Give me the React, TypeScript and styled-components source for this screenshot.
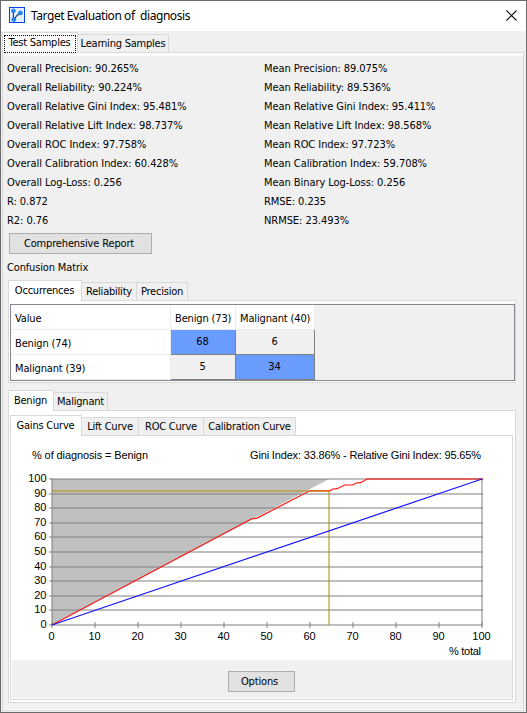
import React from "react";
import styled, { createGlobalStyle } from "styled-components";

const Global = createGlobalStyle`
  * { box-sizing: border-box; }
  body { margin: 0; background: #f0f0f0; }
`;

const Window = styled.main`
  width: 527px;
  height: 713px;
  display: flex;
  flex-direction: column;
  background: #f0f0f0;
  border: 1px solid #6b6a6c;
  font: 11px/14px "DejaVu Sans Condensed", "DejaVu Sans", sans-serif;
  letter-spacing: -0.15px;
  color: #000;
  overflow: hidden;
  white-space: pre;
`;

const TitleBar = styled.header`
  height: 30px;
  flex: none;
  display: flex;
  align-items: center;
  padding: 0 9px 2px 8px;
  background: #fff;
`;

const Title = styled.h1`
  flex: 1;
  margin: 2px 0 0 6px;
  font: 400 12px/16px "Noto Sans", "Open Sans", sans-serif;
  letter-spacing: -0.43px;
`;

const CloseButton = styled.button`
  width: 11px;
  height: 11px;
  display: block;
  padding: 0;
  border: 0;
  background: none;

  svg { display: block; }
`;

const TabBar = styled.nav<{ $inset?: number; $gap?: number }>`
  height: 21px;
  flex: none;
  display: flex;
  align-items: flex-end;
  margin-top: ${(p) => p.$gap ?? 0}px;
  margin-left: ${(p) => p.$inset ?? 0}px;
  position: relative;
  z-index: 1;
`;

const Tab = styled.button<{ $w: number; $active?: boolean }>`
  width: ${(p) => p.$w}px;
  height: ${(p) => (p.$active ? 21 : 18)}px;
  margin: 0 0 ${(p) => (p.$active ? -1 : 0)}px;
  padding: ${(p) => (p.$active ? "0 1px 1px 0" : "0")};
  flex: none;
  display: flex;
  align-items: center;
  justify-content: center;
  border: 1px solid #d9d9d9;
  border-bottom: 0;
  border-left-width: ${(p) => (p.$active ? 1 : 0)}px;
  background: ${(p) => (p.$active ? "#fff" : "#f0f0f0")};
  color: inherit;
  font: inherit;
  letter-spacing: -0.22px;
  white-space: nowrap;
`;

const FocusRing = styled.span`
  height: 18px;
  width: 72px;
  flex: none;
  margin-top: 2px;
  border: 1px dotted #000;
  line-height: 14px;
`;

const Panel = styled.section<{ $h: number; $pad: string; $m?: string }>`
  height: ${(p) => p.$h}px;
  flex: none;
  display: flex;
  flex-direction: column;
  margin: ${(p) => p.$m ?? "0"};
  padding: ${(p) => p.$pad};
  border: 1px solid #d9d9d9;
  background: #fff;
`;

const Body = styled.div`
  flex: 1;
  display: flex;
  flex-direction: column;
  padding: 3px 7px 0 4px;
  background: #f0f0f0;
`;

const Stats = styled.dl`
  margin: 0;
  display: grid;
  grid-template-columns: 257px 1fr;
  grid-auto-rows: 19px;
  letter-spacing: -0.06px;
`;

const Stat = styled.div`
  line-height: 19px;
`;

const PushButton = styled.button<{ $w: number }>`
  width: ${(p) => p.$w}px;
  height: 21px;
  padding: 0 3px 0 0;
  flex: none;
  border: 1px solid #adadad;
  background: #e1e1e1;
  color: inherit;
  font: inherit;
  letter-spacing: inherit;
`;

const ReportRow = styled.div`
  height: 28px;
  padding: 3px 0 0 2px;
`;

const SectionLabel = styled.div`
  height: 21px;
  line-height: 13px;
  padding-top: 3px;
`;

const Matrix = styled.div`
  flex: 1;
  display: grid;
  grid-template-columns: 160px 65px 79px;
  grid-template-rows: 25px 25px 25px;
  border: 1px solid #828790;
  background: #f0f0f0;
`;

const Head = styled.div`
  padding-left: 4px;
  line-height: 28px;
  background: #fff;
  border-right: 1px solid #ececec;
  border-bottom: 1px solid #ececec;
`;

const Cell = styled.div<{ $hit?: boolean }>`
  padding-right: 1px;
  text-align: center;
  line-height: 24px;
  background: ${(p) => (p.$hit ? "#6a9bff" : "#f0f0f0")};
  border-right: 1px solid #808080;
  border-bottom: 1px solid #808080;
`;

const Chart = styled.svg`
  display: block;
  flex: none;
  width: 501px;
  height: 224px;
  background: #fff;
  font: 11px "Liberation Sans", Arial, sans-serif;
  letter-spacing: 0;
`;

const Footer = styled.div`
  flex: 1;
  display: flex;
  justify-content: center;
  margin-left: 1px;
  padding: 11px 2px 0 0;
  background: #f0f0f0;
`;

const stats = [
  ["Overall Precision: 90.265%", "Mean Precision: 89.075%"],
  ["Overall Reliability: 90.224%", "Mean Reliability: 89.536%"],
  ["Overall Relative Gini Index: 95.481%", "Mean Relative Gini Index: 95.411%"],
  ["Overall Relative Lift Index: 98.737%", "Mean Relative Lift Index: 98.568%"],
  ["Overall ROC Index: 97.758%", "Mean ROC Index: 97.723%"],
  ["Overall Calibration Index: 60.428%", "Mean Calibration Index: 59.708%"],
  ["Overall Log-Loss: 0.256", "Mean Binary Log-Loss: 0.256"],
  ["R: 0.872", "RMSE: 0.235"],
  ["R2: 0.76", "NRMSE: 23.493%"],
];

const ticks = [0, 10, 20, 30, 40, 50, 60, 70, 80, 90, 100];
const X0 = 41;
const Y0 = 189;
const TOP = 43;
const px = (v: number) => X0 + v * 4.3;
const py = (v: number) => Math.round(Y0 - v * 1.46);

const AppIcon = () => (
  <svg width="16" height="16" viewBox="0 0 16 16">
    <rect x="0.5" y="0.5" width="15" height="15" fill="#e4f1fd" stroke="#0b3fe8" />
    <path d="M4.4 4v8M5 12.5L8 8.5L11 6.2" stroke="#26305c" strokeWidth="1.1" fill="none" />
    <g fill="#1a8ff5" stroke="#0a5ce0" strokeWidth="0.6">
      <circle cx="4.4" cy="3.8" r="1.9" />
      <circle cx="11.4" cy="5.9" r="2" />
      <circle cx="4.8" cy="12.6" r="2" />
    </g>
  </svg>
);

const GainsChart = () => (
  <Chart viewBox="0 0 501 224">
    <text x="21" y="23" textLength="116">% of diagnosis = Benign</text>
    <text x="239" y="23" textLength="231">Gini Index: 33.86% - Relative Gini Index: 95.65%</text>
    <polygon points={`${X0},${Y0} ${X0},${TOP} 318,${TOP}`} fill="#c0c0c0" />
    <g stroke="#808080" strokeOpacity="0.5" strokeWidth="2">
      {ticks.map((t) => (
        <g key={t}>
          <line x1={X0 - 3} x2={px(100) + 1} y1={py(t)} y2={py(t)} />
          <line x1={px(t)} x2={px(t)} y1={Y0 - 3} y2={Y0 + 3} />
        </g>
      ))}
      <line x1={X0} x2={X0} y1={TOP - 1} y2={Y0} />
      <line x1={px(100)} x2={px(100)} y1={TOP - 1} y2={Y0} />
    </g>
    <polyline
      points={`${X0},${Y0} 240.7,82.8 245.7,82.3 298.7,54.8 318.7,54.8 322,53 326,52.7 333.7,49 341.3,49 345.3,47 349.7,46.7 356,43`}
      fill="none"
      stroke="#ff1414"
      strokeWidth="1.2"
    />
    <line x1="356" x2="472" y1={TOP} y2={TOP} stroke="#ff0000" strokeOpacity="0.5" strokeWidth="2" />
    <path d={`M${X0} 55H318V${Y0}`} stroke="#b28c00" strokeOpacity="0.5" strokeWidth="2" fill="none" />
    <line x1={X0} y1={Y0} x2={px(100)} y2={TOP} stroke="#1414ff" strokeWidth="1.2" />
    {ticks.map((t) => (
      <g key={t}>
        <text x={X0 - 5.5} y={py(t) + 3} textAnchor="end">{t}</text>
        <text x={px(t) - 0.5} y="204" textAnchor="middle">{t}</text>
      </g>
    ))}
    <text x="438" y="219" textLength="32">% total</text>
  </Chart>
);

export default function App() {
  return (
    <>
      <Global />
      <Window>
        <TitleBar>
          <AppIcon />
          <Title>Target Evaluation of  diagnosis</Title>
          <CloseButton aria-label="Close">
            <svg width="11" height="11" viewBox="0 0 11 11">
              <path d="M0.5 0.5l10 10M10.5 0.5l-10 10" stroke="#111" strokeWidth="1.1" />
            </svg>
          </CloseButton>
        </TitleBar>
        <TabBar $inset={1}>
          <Tab $w={76} $active><FocusRing>Test Samples</FocusRing></Tab>
          <Tab $w={91}>Learning Samples</Tab>
        </TabBar>
        <Panel $h={659} $pad="3px 0 1px 0" $m="0 2px 0 1px">
          <Body>
            <Stats>
              {stats.flat().map((s) => <Stat key={s}>{s}</Stat>)}
            </Stats>
            <ReportRow><PushButton $w={143}>Comprehensive Report</PushButton></ReportRow>
            <SectionLabel>Confusion Matrix</SectionLabel>
            <TabBar $inset={1}>
              <Tab $w={74} $active>Occurrences</Tab>
              <Tab $w={55}>Reliability</Tab>
              <Tab $w={51}>Precision</Tab>
            </TabBar>
            <Panel $h={83} $pad="3px 0 1px 1px" $m="0 0 0 1px">
              <Matrix>
                <Head>Value</Head><Head>Benign (73)</Head><Head>Malignant (40)</Head>
                <Head>Benign (74)</Head><Cell $hit>68</Cell><Cell>6</Cell>
                <Head>Malignant (39)</Head><Cell>5</Cell><Cell $hit>34</Cell>
              </Matrix>
            </Panel>
            <TabBar $inset={1} $gap={6}>
              <Tab $w={46} $active>Benign</Tab>
              <Tab $w={54}>Malignant</Tab>
            </TabBar>
            <Panel $h={293} $pad="3px 2px 2px 1px" $m="0 0 0 1px">
              <TabBar>
                <Tab $w={72} $active>Gains Curve</Tab>
                <Tab $w={57}>Lift Curve</Tab>
                <Tab $w={65}>ROC Curve</Tab>
                <Tab $w={92}>Calibration Curve</Tab>
              </TabBar>
              <Panel $h={265} $pad="0 0 1px 0">
                <GainsChart />
                <Footer><PushButton $w={67}>Options</PushButton></Footer>
              </Panel>
            </Panel>
          </Body>
        </Panel>
      </Window>
    </>
  );
}
